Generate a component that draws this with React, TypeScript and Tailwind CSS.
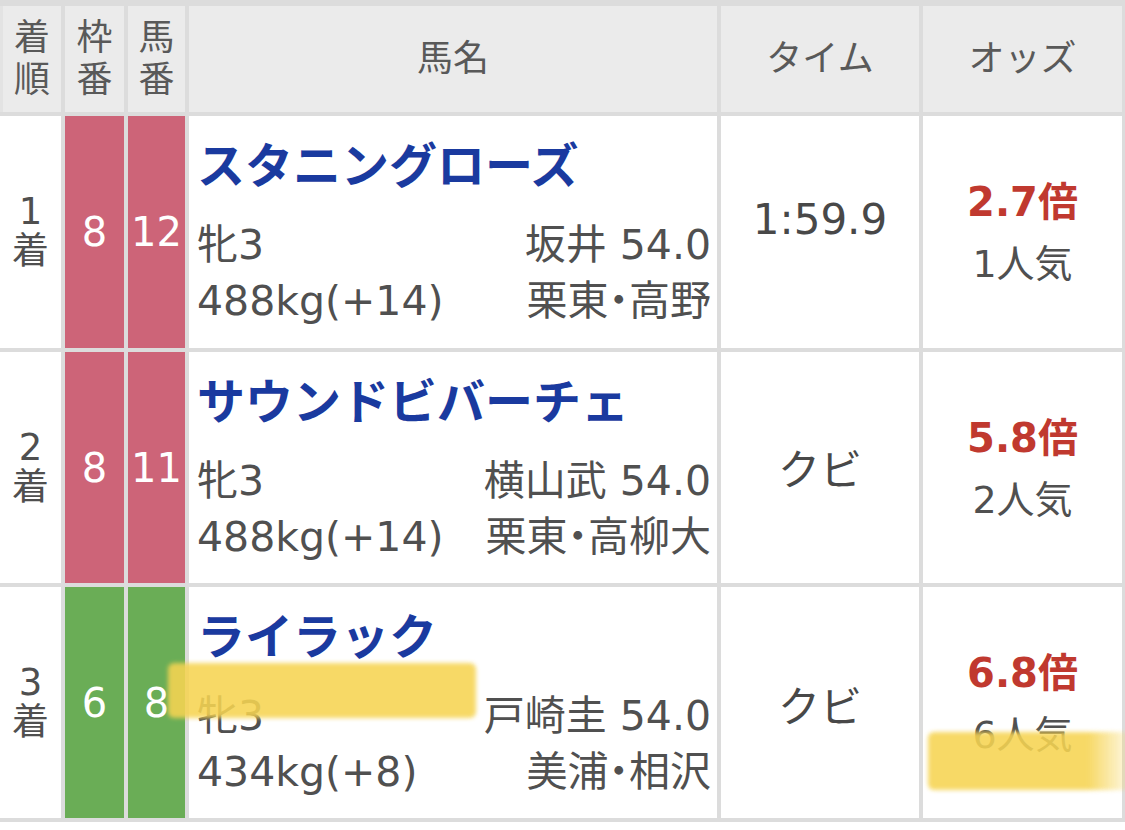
import React from 'react';

type Row = {
  rank: string;
  waku: string;
  uma: string;
  color: string;
  name: string;
  sex: string;
  jockey: string;
  weight: string;
  trainer: string;
  time: string;
  timeClass: string;
  odds: string;
  pop: string;
  h: string;
};

const rows: Row[] = [
  {
    rank: '1',
    waku: '8',
    uma: '12',
    color: 'bg-[#cd6478]',
    name: 'スタニングローズ',
    sex: '牝3',
    jockey: '坂井 54.0',
    weight: '488kg(+14)',
    trainer: '栗東・高野',
    time: '1:59.9',
    timeClass: 'pb-[26px]',
    odds: '2.7倍',
    pop: '1人気',
    h: 'h-[232px]',
  },
  {
    rank: '2',
    waku: '8',
    uma: '11',
    color: 'bg-[#cd6478]',
    name: 'サウンドビバーチェ',
    sex: '牝3',
    jockey: '横山武 54.0',
    weight: '488kg(+14)',
    trainer: '栗東・高柳大',
    time: 'クビ',
    timeClass: 'pt-[6px]',
    odds: '5.8倍',
    pop: '2人気',
    h: 'h-[231px]',
  },
  {
    rank: '3',
    waku: '6',
    uma: '8',
    color: 'bg-[#6aad56]',
    name: 'ライラック',
    sex: '牝3',
    jockey: '戸崎圭 54.0',
    weight: '434kg(+8)',
    trainer: '美浦・相沢',
    time: 'クビ',
    timeClass: 'pt-[10px]',
    odds: '6.8倍',
    pop: '6人気',
    h: 'h-[231px]',
  },
];

const font = "font-['DejaVu_Sans','Noto_Sans_CJK_JP',sans-serif]";

export default function App() {
  return (
    <div className={`relative w-[1125px] h-[830px] bg-white overflow-hidden ${font}`}>
      {/* Table */}
      <div className="grid grid-cols-[61px_59px_57px_528px_198px_199px] gap-[4px] bg-[#dcdcdc] pt-[6px] pb-[4px] pr-[3px]">
        {/* Header */}
        <div className="h-[106px] bg-[#ebebeb] border-l-[3px] border-[#e3e3e3] flex flex-col items-center justify-center text-[36px] leading-[42px] text-[#595959]">
          <span>着</span>
          <span>順</span>
        </div>
        <div className="bg-[#ebebeb] flex flex-col items-center justify-center text-[36px] leading-[42px] text-[#595959]">
          <span>枠</span>
          <span>番</span>
        </div>
        <div className="bg-[#ebebeb] flex flex-col items-center justify-center text-[36px] leading-[42px] text-[#595959]">
          <span>馬</span>
          <span>番</span>
        </div>
        <div className="bg-[#ebebeb] flex items-center justify-center text-[36px] text-[#595959]">馬名</div>
        <div className="bg-[#ebebeb] flex items-center justify-center text-[36px] text-[#595959]">タイム</div>
        <div className="bg-[#ebebeb] flex items-center justify-center text-[36px] text-[#595959]">オッズ</div>

        {rows.map((r) => (
          <React.Fragment key={r.rank}>
            {/* Rank */}
            <div className={`${r.h} bg-white flex flex-col items-center justify-center text-[37px] leading-[40px] text-[#4f4f4f]`}>
              <span>{r.rank}</span>
              <span>着</span>
            </div>
            {/* Waku */}
            <div className={`${r.color} flex items-center justify-center text-[40px] text-white`}>{r.waku}</div>
            {/* Umaban */}
            <div className={`${r.color} flex items-center justify-center text-[40px] text-white`}>{r.uma}</div>
            {/* Horse */}
            <div className="bg-white pt-[18px] pl-[8px] pr-[6px]">
              <div className="text-[48px] leading-[56px] font-bold text-[#1a3a9f] font-['Noto_Sans_CJK_JP',sans-serif] whitespace-nowrap">
                {r.name}
              </div>
              <div className="mt-[27px] text-[41px] leading-[56px] text-[#505050] [font-feature-settings:'palt']">
                <div className="flex justify-between">
                  <span>{r.sex}</span>
                  <span>{r.jockey}</span>
                </div>
                <div className="flex justify-between">
                  <span>{r.weight}</span>
                  <span>{r.trainer}</span>
                </div>
              </div>
            </div>
            {/* Time */}
            <div className={`bg-white flex items-center justify-center text-[42px] text-[#484848] ${r.timeClass}`}>
              {r.time}
            </div>
            {/* Odds */}
            <div className="bg-white flex flex-col items-center justify-center pt-[2px]">
              <span className="text-[40px] leading-[62px] font-bold text-[#c0392f]">{r.odds}</span>
              <span className="text-[38px] leading-[62px] text-[#505050]">{r.pop}</span>
            </div>
          </React.Fragment>
        ))}
      </div>

      {/* Highlighter marks */}
      <div className="absolute left-[168px] top-[663px] w-[308px] h-[55px] rounded-[6px] bg-[#f6d452] opacity-[0.88] blur-[2px]" />
      <div className="absolute left-[928px] top-[732px] w-[200px] h-[58px] rounded-l-[6px] bg-gradient-to-r from-[#f6d452] from-80% to-[#f6d452]/20 opacity-[0.88] blur-[2px]" />
    </div>
  );
}
